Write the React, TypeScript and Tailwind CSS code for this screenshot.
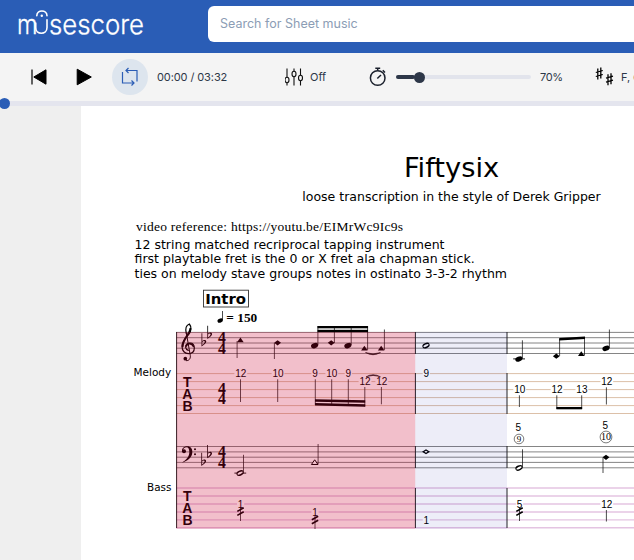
import React from "react";

type Pt = { x: number; y: number };

const Stem = ({ x, y1, y2 }: { x: number; y1: number; y2: number }) => (
  <line x1={x} x2={x} y1={y1} y2={y2} stroke="#111" strokeWidth={0.75} />
);
const Oval = ({ x, y }: Pt) => (
  <ellipse cx={x} cy={y} rx={3.7} ry={2.5} transform={`rotate(-22 ${x} ${y})`} />
);
const HollowOval = ({ x, y }: Pt) => (
  <g transform={`rotate(-25 ${x} ${y})`}>
    <ellipse cx={x} cy={y} rx={3.8} ry={2.6} />
    <ellipse cx={x} cy={y} rx={2.9} ry={1.1} fill="#fff" />
  </g>
);
const Diamond = ({ x, y }: Pt) => (
  <path d={`M${x - 3.4} ${y} L${x} ${y - 2.6} L${x + 3.4} ${y} L${x} ${y + 2.6}Z`} />
);
const HollowDiamond = ({ x, y }: Pt) => (
  <path
    d={`M${x - 2.8} ${y} L${x} ${y - 1.8} L${x + 2.8} ${y} L${x} ${y + 1.8}Z`}
    fill="#fff"
    stroke="#000"
    strokeWidth={1.3}
  />
);
const Triangle = ({ x, y, hollow }: Pt & { hollow?: boolean }) => (
  <path
    d={`M${x - 3.3} ${y + 2.2} L${x} ${y - 2.5} L${x + 3.3} ${y + 2.2}Z`}
    fill={hollow ? "#fff" : "#000"}
    stroke={hollow ? "#000" : "none"}
    strokeWidth={1}
  />
);
const Fret = ({ x, y, n }: Pt & { n: string }) => (
  <g>
    <rect x={x - n.length * 2.8 - 0.8} y={y - 4} width={n.length * 5.6 + 1.6} height={8} fill="#fff" />
    <text x={x} y={y + 3.6} textAnchor="middle" fontSize={10} className="font-['Liberation_Sans',sans-serif]">
      {n}
    </text>
  </g>
);
const Flat = ({ x, y }: Pt) => (
  <path
    d={`M${x - 0.4} ${y}H${x + 0.4}V${y + 7.6}C${x + 2} ${y + 6.2} ${x + 4.4} ${y + 6.4} ${x + 4.4} ${y + 8.3}C${x + 4.4} ${y + 10.2} ${x + 2} ${y + 11.6} ${x - 0.4} ${y + 13.2}Z M${x + 0.4} ${y + 8.6}V${y + 11.6}C${x + 1.8} ${y + 10.6} ${x + 2.9} ${y + 9.4} ${x + 2.9} ${y + 8.4}C${x + 2.9} ${y + 7.3} ${x + 1.4} ${y + 7.4} ${x + 0.4} ${y + 8.6}Z`}
    fillRule="evenodd"
  />
);
const TimeSig = ({ y }: { y: number }) => (
  <g fontSize={15.8} fontWeight={700} textAnchor="middle" className="font-['Liberation_Serif',serif]">
    <text x={222} y={y + 10.4}>4</text>
    <text x={222} y={y + 21}>4</text>
  </g>
);
const TabClef = ({ y }: { y: number }) => (
  <g fontSize={14} fontWeight={700} textAnchor="middle" className="font-['Liberation_Sans',sans-serif]">
    <text x={187.3} y={y}>T</text>
    <text x={187.3} y={y + 12}>A</text>
    <text x={187.6} y={y + 24}>B</text>
  </g>
);
const Slashes = ({ x, y }: Pt) => (
  <path
    d={`M${x - 3.2} ${y + 1.8} L${x + 3.2} ${y - 1.8} M${x - 3.2} ${y + 5.8} L${x + 3.2} ${y + 2.2}`}
    stroke="#000"
    strokeWidth={1.6}
  />
);
const Lines = ({ ys, color, w }: { ys: number[]; color: string; w: number }) => (
  <>
    {ys.map((y) => (
      <line key={y} x1={176} x2={634} y1={y} y2={y} stroke={color} strokeWidth={w} />
    ))}
  </>
);

function Score() {
  return (
    <svg viewBox="81 285 553 275" width={553} height={275} className="block shrink-0">
      <Lines ys={[332.4, 337.7, 343, 348.2, 353.5]} color="#777" w={0.9} />
      <Lines ys={[373.6, 381.6, 389.6, 397.6, 405.6, 413.5]} color="#dcc0a8" w={1} />
      <Lines ys={[446.5, 451.9, 457.2, 462.4, 467.8]} color="#777" w={0.9} />
      <Lines ys={[488, 496, 504, 512, 519.9, 527.8]} color="#e4c4e2" w={1.4} />

      <g stroke="#222" strokeWidth={1}>
        <line x1={176.6} x2={176.6} y1={332} y2={528} />
        {[415.4, 507].map((x) => (
          <path key={x} d={`M${x} 332V354M${x} 373V414M${x} 446V468M${x} 488V528`} />
        ))}
      </g>

      {/* treble clef */}
      <g transform="translate(125 285) scale(0.3333)" fill="none" stroke="#000" strokeLinecap="round">
        <path d="M184 146C180 130 185 120 193 117C200 125 199 139 192 147C184 157 171 167 171 184C171 198 180 206 190 206C201 206 208 199 208 189C208 179 202 174 195 174C186 174 181 181 182 187C183 193 187 195 190 196" strokeWidth={3.6} />
        <path d="M196 131C196 145 173 162 173 184" strokeWidth={6} />
        <path d="M205 184C202 175 187 172 184 183" strokeWidth={5} />
        <path d="M184 144L196 212C197 222 191 228 184 227" strokeWidth={3} />
        <circle cx={181} cy={221} r={5.5} fill="#000" stroke="none" />
      </g>
      {/* bass clef */}
      <g transform="translate(125 410) scale(0.3333)">
        <circle cx={177} cy={124} r={6} />
        <path d="M171 123C171 114 178 109 187 109C197 109 202 116 202 126C202 142 188 153 171 158C184 149 193 141 193 126C193 117 190 112 185 112C178 112 174 116 174 123Z" />
        <circle cx={210} cy={118} r={3} />
        <circle cx={210} cy={133} r={3} />
      </g>
      <Flat x={201.9} y={333.3} />
      <Flat x={207.7} y={325.8} />
      <Flat x={201.7} y={452.8} />
      <Flat x={207.6} y={445.1} />
      <TimeSig y={332.5} />
      <TimeSig y={383.3} />
      <TimeSig y={446.6} />
      <TabClef y={387} />
      <TabClef y={501} />

      {/* melody staff */}
      <Triangle x={240.4} y={340} /><Stem x={237.1} y1={341} y2={358} />
      <Diamond x={277.6} y={342.8} /><Stem x={274.4} y1={343} y2={359} />
      <Oval x={314.6} y={345.6} /><Stem x={317.9} y1={326} y2={345} />
      <Diamond x={331.2} y={342.8} /><Stem x={334.4} y1={326} y2={343} />
      <Oval x={347.9} y={345.6} /><Stem x={351.2} y1={326} y2={345} />
      <Triangle x={364.4} y={348.3} /><Stem x={367.6} y1={326} y2={350} />
      <rect x={317.5} y={326} width={50.5} height={2.3} />
      <rect x={317.5} y={329.8} width={50.5} height={2.3} />
      <Triangle x={381.2} y={348.3} /><Stem x={384.4} y1={329.5} y2={350} />
      <path d="M365.5 352.5Q373 357 380.5 352.5Q373 355.4 365.5 352.5Z" stroke="#000" strokeWidth={0.5} />
      <HollowOval x={426} y={345.6} />
      <line x1={513.2} x2={525} y1={358.9} y2={358.9} stroke="#000" strokeWidth={0.9} />
      <Oval x={518.9} y={359} /><Stem x={522.4} y1={340.3} y2={358.5} />
      <Diamond x={556.3} y={356.2} /><Stem x={559.6} y1={339} y2={356} />
      <Triangle x={581.3} y={353.7} /><Stem x={584.5} y1={337.5} y2={355.5} />
      <path d="M559.2 338L585 336.6V339L559.2 340.4Z" />
      <Oval x={606} y={348.3} /><Stem x={609.4} y1={329.5} y2={348} />

      {/* melody tablature */}
      <Fret x={240.8} y={373.8} n="12" /><Stem x={240.5} y1={379.3} y2={402} />
      <Fret x={278} y={373.8} n="10" /><Stem x={277.7} y1={379.3} y2={402} />
      <Fret x={315} y={373.8} n="9" /><Stem x={315.3} y1={379.3} y2={405} />
      <Fret x={331.8} y={373.8} n="10" /><Stem x={331.7} y1={379.3} y2={405} />
      <Fret x={348.3} y={373.8} n="9" /><Stem x={348.3} y1={379.3} y2={405} />
      <Fret x={365} y={381.8} n="12" /><Stem x={364.8} y1={387} y2={406.5} />
      <Fret x={381.8} y={381.8} n="12" /><Stem x={381.4} y1={387} y2={404.3} />
      <path d="M315 399.2L365.2 400.3V402.8L315 401.7Z M315 402.9L365.2 404.3V406.8L315 405.4Z" />
      <path d="M366 376.8Q373 372.6 380.5 376.8Q373 374 366 376.8Z" stroke="#000" strokeWidth={0.5} />
      <Fret x={426.3} y={373.8} n="9" />
      <Fret x={519.7} y={389.8} n="10" /><Stem x={519.4} y1={395.3} y2={407} />
      <Fret x={557} y={389.8} n="12" /><Stem x={556.8} y1={395.3} y2={409} />
      <Fret x={581.9} y={389.8} n="13" /><Stem x={581.7} y1={395.3} y2={409} />
      <rect x={556.4} y={407} width={25.7} height={2.3} />
      <Fret x={606.8} y={381.8} n="12" /><Stem x={606.4} y1={387.3} y2={404.5} />

      {/* bass staff */}
      <line x1={234.4} x2={246.2} y1={473.1} y2={473.1} stroke="#000" strokeWidth={0.9} />
      <HollowOval x={240.1} y={473.1} /><Stem x={243.5} y1={454.8} y2={472.8} />
      <Triangle x={314.7} y={462.3} hollow /><Stem x={318.1} y1={444} y2={464} />
      <HollowDiamond x={426} y={451.8} />
      <HollowOval x={519} y={467.9} /><Stem x={522.5} y1={449.3} y2={467.5} />
      <Diamond x={606} y={457.3} /><Stem x={603} y1={457.5} y2={473} />
      <g textAnchor="middle" className="font-['Liberation_Sans',sans-serif]">
        <text x={518.4} y={431.3} fontSize={10}>5</text>
        <text x={605.2} y={428.6} fontSize={10}>5</text>
      </g>
      <g textAnchor="middle" fontSize={9} className="font-['Liberation_Serif',serif]">
        <text x={519} y={442}>9</text>
        <text x={606} y={440.2} fontSize={10}>10</text>
      </g>
      <g fill="none" stroke="#222" strokeWidth={0.6}>
        <circle cx={519} cy={439} r={4.8} />
        <circle cx={606} cy={437} r={5.9} />
      </g>

      {/* bass tablature */}
      <Fret x={240.6} y={504} n="1" /><Stem x={240.5} y1={508} y2={521} /><Slashes x={240.5} y={509.6} />
      <Fret x={315} y={512} n="1" /><Stem x={315} y1={516} y2={529} /><Slashes x={315} y={518} />
      <Fret x={426.3} y={520} n="1" />
      <Fret x={519.5} y={504} n="5" /><Stem x={519.5} y1={508} y2={521} /><Slashes x={519.5} y={509.6} />
      <Fret x={606.8} y={504} n="12" /><Stem x={606.4} y1={510} y2={521.5} />

      {/* selection and playback overlays */}
      <rect x={176.5} y={332} width={238.7} height={196.7} fill="rgba(204,0,48,0.25)" />
      <rect x={415.2} y={332} width={91.8} height={196.7} fill="rgba(20,30,160,0.08)" />

      <g className="font-['DejaVu_Sans',sans-serif]">
        <text x={133.6} y={376} fontSize={10} textLength={37.6} lengthAdjust="spacingAndGlyphs">Melody</text>
        <text x={147} y={491.2} fontSize={10} textLength={24.4} lengthAdjust="spacingAndGlyphs">Bass</text>
        <text x={205.2} y={304} fontSize={14.8} fontWeight={700} textLength={40.8} lengthAdjust="spacingAndGlyphs">Intro</text>
      </g>
      <rect x={203.5} y={290.2} width={45} height={16.8} fill="none" stroke="#333" strokeWidth={0.9} />
      <Stem x={222.5} y1={311} y2={320.4} />
      <ellipse cx={220.2} cy={320.6} rx={2.8} ry={2} transform="rotate(-22 220.2 320.6)" />
      <text x={226.3} y={321.9} fontSize={13} fontWeight={700} textLength={31} lengthAdjust="spacingAndGlyphs" className="font-['Liberation_Serif',serif]">= 150</text>
    </svg>
  );
}

function Logo() {
  return (
    <svg viewBox="0 0 150 36" width={150} height={36} className="block">
      <g fill="#fff" stroke="#fff" strokeWidth={0.3} fontSize={27} fontWeight={300} className="font-[Inter,sans-serif]">
        <text x={0.9} y={25.5} textLength={20.5} lengthAdjust="spacingAndGlyphs">m</text>
        <text x={33} y={25.5} textLength={95} lengthAdjust="spacingAndGlyphs">sescore</text>
      </g>
      <g fill="none" stroke="#fff" strokeWidth={1.6} strokeLinecap="round">
        <path d="M19.7 15V19.6C19.7 27.2 31 27.2 31 19.6V11.8" />
        <path d="M20.8 7.8C21 1.4 30.8 1.4 31 7.8" />
      </g>
      <circle cx={25.8} cy={7.8} r={1.2} fill="#fff" />
    </svg>
  );
}

const Sharp = ({ x, y }: Pt) => (
  <path
    d={`M${x + 2} ${y + 1}V${y + 12}M${x + 5} ${y}V${y + 11}M${x} ${y + 5}L${x + 7} ${y + 3}M${x} ${y + 9}L${x + 7} ${y + 7}`}
    stroke="#000"
    strokeWidth={1.3}
    fill="none"
  />
);

function Toolbar() {
  return (
    <div className="flex h-12 shrink-0 items-center whitespace-nowrap bg-[#f4f4f4] text-[11px] text-[#2d3748]">
      <svg width={16} height={16} viewBox="0 0 16 16" className="ml-[31px] shrink-0">
        <path d="M1 .5V15.5" stroke="#000" strokeWidth={1.2} />
        <path d="M15 .8V15.2L2.8 8Z" stroke="#000" strokeLinejoin="round" />
      </svg>
      <svg width={17} height={18} viewBox="0 0 17 18" className="ml-[29px] shrink-0">
        <path d="M1.2 1.2V16.8L15.3 9Z" stroke="#000" strokeLinejoin="round" />
      </svg>
      <div className="ml-[19px] flex size-9 shrink-0 items-center justify-center rounded-full bg-[#dde5ee]">
        <svg width={18} height={20} viewBox="0 0 18 20" fill="none" stroke="#2b5db5" strokeWidth={1.2}>
          <path d="M5.5 3.5H16V14.5M7.5 1L5 3.5L7.5 6M1.5 5V16H12.5M10.5 13.5L13 16L10.5 18.5" />
        </svg>
      </div>
      <span className="ml-[9px] w-[72px] shrink-0 tracking-[-0.1px]">00:00 / 03:32</span>
      <svg width={20} height={18} viewBox="0 0 20 18" className="ml-[56px] shrink-0" fill="#f4f4f4" stroke="#111" strokeWidth={1.1}>
        <path d="M2 .5V17.5M9 .5V17.5M15.5 .5V17.5" />
        <ellipse cx={2} cy={12} rx={2} ry={2.7} />
        <ellipse cx={9} cy={6} rx={2} ry={2.7} />
        <ellipse cx={15.5} cy={10} rx={2} ry={2.7} />
      </svg>
      <span className="ml-[5px] w-[17px] shrink-0">Off</span>
      <svg width={18} height={20} viewBox="0 0 18 20" className="ml-[42px] shrink-0" fill="none" stroke="#1a202c" strokeWidth={1.5}>
        <circle cx={8.7} cy={11} r={7.3} />
        <path d="M6.3 1.3H11.2M8.7 1.5V3.5M8.3 11.5L12 8M13.8 3.3L16 5.5" />
      </svg>
      <div className="ml-[9px] flex h-1 w-[135px] shrink-0 items-center rounded-full bg-[#e2e4ec]">
        <div className="h-1 w-[19px] rounded-full bg-[#2d3748]" />
        <div className="-ml-px size-[11px] rounded-full bg-[#2d3748]" />
      </div>
      <span className="ml-[9px] w-[22px] shrink-0 tracking-[-0.4px]">70%</span>
      <svg width={20} height={20} viewBox="0 0 20 20" className="ml-[33px] shrink-0">
        <Sharp x={0.8} y={0.5} />
        <Sharp x={11} y={6.2} />
      </svg>
      <span className="ml-[6px] shrink-0">F, d</span>
    </div>
  );
}

export default function App() {
  return (
    <div className="flex h-[560px] w-[634px] flex-col overflow-hidden bg-white font-[Inter,sans-serif]">
      <header className="flex h-[53px] shrink-0 bg-[#2a5db6]">
        <div className="w-[208px] shrink-0 pt-2 pl-[16px]">
          <Logo />
        </div>
        <div className="mt-1.5 flex h-9 flex-1 items-center rounded-l-md bg-white pl-3 text-[12.5px] text-[#8c9db5]">
          Search for Sheet music
        </div>
      </header>
      <Toolbar />
      <div className="relative z-10 flex h-[5px] shrink-0 items-center bg-[#e4e5ee]">
        <div className="-ml-px size-[11px] shrink-0 rounded-full bg-[#2a5db6]" />
      </div>
      <main className="flex flex-1 overflow-hidden">
        <aside className="w-[81px] shrink-0 bg-[#efefef]" />
        <section className="flex h-[454px] w-[553px] shrink-0 flex-col whitespace-nowrap font-['DejaVu_Sans',sans-serif] text-black">
          <h1 className="mt-[46px] h-8 pl-[188px] text-center text-[27.3px] leading-[32px]">Fiftysix</h1>
          <h2 className="mt-[5px] h-4 pl-[188px] text-center text-[12.5px] leading-[16px]">
            loose transcription in the style of Derek Gripper
          </h2>
          <p className="mt-[14px] h-4 pl-[55px] font-['Liberation_Serif',serif] text-[13.5px] leading-[16px] tracking-[0.25px]">
            video reference: https://youtu.be/EIMrWc9Ic9s
          </p>
          <div className="mt-[2.5px] h-[47.5px] pl-[53.5px] text-[12.52px] leading-[14.5px]">
            <p>12 string matched recriprocal tapping instrument</p>
            <p>first playtable fret is the 0 or X fret ala chapman stick.</p>
            <p>ties on melody stave groups notes in ostinato 3-3-2 rhythm</p>
          </div>
          <Score />
        </section>
      </main>
    </div>
  );
}
